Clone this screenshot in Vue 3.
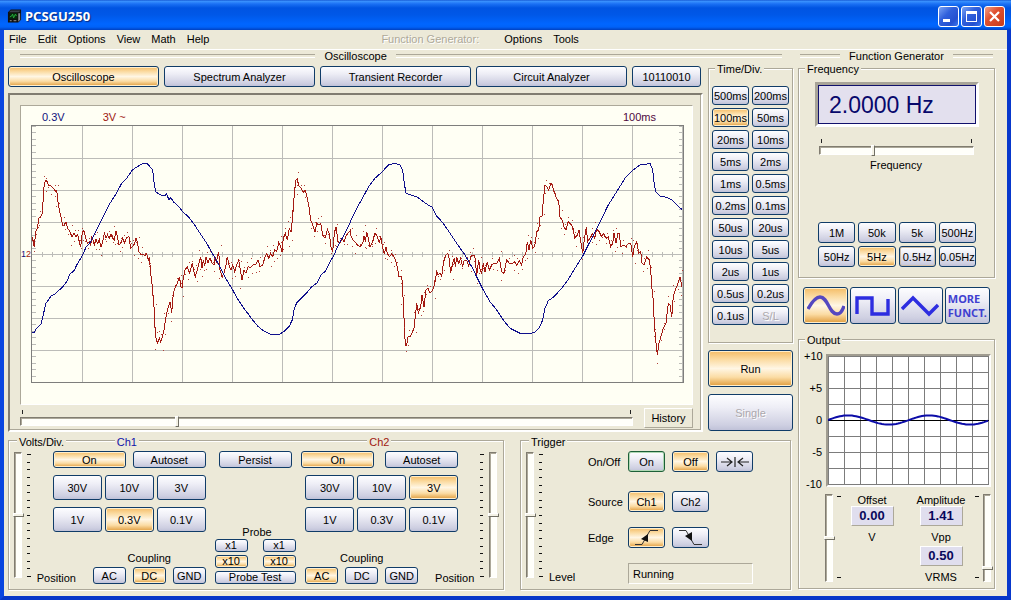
<script setup>
import { ref } from 'vue'

const menus = ['File', 'Edit', 'Options', 'View', 'Math', 'Help']
const tabs = ['Oscilloscope', 'Spectrum Analyzer', 'Transient Recorder', 'Circuit Analyzer', '10110010']
const activeTab = ref('Oscilloscope')

const timeDivs = [
  '500ms', '200ms', '100ms', '50ms', '20ms', '10ms', '5ms', '2ms', '1ms', '0.5ms', '0.2ms',
  '0.1ms', '50us', '20us', '10us', '5us', '2us', '1us', '0.5us', '0.2us', '0.1us', 'S/L'
]
const timeDiv = ref('100ms')

const volts = ['30V', '10V', '3V', '1V', '0.3V', '0.1V']
const couplings = ['AC', 'DC', 'GND']
const ch1 = ref({ volts: '0.3V', coupling: 'DC', probe: 'x10' })
const ch2 = ref({ volts: '3V', coupling: 'AC', probe: 'x10' })
const trigger = ref('Off')
const source = ref('Ch1')
const edge = ref('up')

const ranges = ['1M', '50k', '5k', '500Hz', '50Hz', '5Hz', '0.5Hz', '0.05Hz']
const range = ref('5Hz')
const wave = ref('sine')

const history = ref(155)
const position1 = ref(50)
const position2 = ref(50)
const level = ref(50)
const frequency = ref(34)
const offset = ref(50)
const amplitude = ref(86)

const ch2Samples = [
  '97,380 103,412 107,365 112,355 117,325 122,320 127,310 132,230 136,212 140,212 145,225 152,228 160,235 168,245 170,240 173,270 178,300 183,320 188,345 193,345 198,335 203,355 210,365 216,382 222,368 228,380 233,375 238,395 242,412 247,365 252,362 256,380 262,400 268,395 272,405 275,382 278,385 283,405 288,388 293,400 298,388 303,412 308,395 313,370 318,385 323,375 328,385 333,372 338,385 343,390 348,362 352,380 357,405 362,400 368,385 373,400 380,382 387,380 392,415 398,410 404,400 408,385 412,395 417,425 422,432 428,432 435,438 440,430 445,450 448,440 452,490 457,530 462,590 464,640 467,680 472,700 478,685 482,695 487,680 492,660 497,625 505,590 510,575 515,608 520,550 526,530 532,520 538,500 543,530 546,535 550,505 555,480 562,470 568,490 573,475 577,460 582,485 586,500 592,480 597,460 602,440 606,475 610,450 614,468 618,440 624,458 630,443 636,460 642,465 646,440 649,460 652,440 656,425 660,480 666,500 672,490 677,470 682,440 688,470 693,480 698,465 704,485 710,465 716,450 720,475 726,510 732,480 738,490 744,470 752,472 760,465 768,462 774,450 780,470 788,465 795,440 800,430 806,445 812,430 818,440 824,420 830,425 836,398 842,410 846,425 850,385 856,370 862,390 868,355 873,365 877,330 880,290 884,240 888,210 892,207 896,228 903,235 910,248 915,240 921,260 927,290 932,330 938,345 945,365 950,340 956,345 962,340 968,375 975,385 982,360 988,370 993,410 998,425 1003,370 1008,350 1014,395 1020,400 1026,385 1032,395 1038,378 1044,370 1050,362',
  '0,370 8,390 15,395 22,405 30,410 38,400 42,378 46,395 50,365 54,380 60,412 68,395 75,368 82,380 88,400 92,378 98,415 103,432 108,410 112,430 118,440 125,432 132,440 138,455 142,470 147,500 155,500 158,530 160,590 163,640 166,705 170,705 174,680 180,680 186,668 192,655 196,620 200,580 205,608 212,590 216,555 222,590 228,540 234,535 240,550 248,540 254,520 260,485 265,495 270,490 275,500 280,460 285,440 292,430 296,435 302,488 308,460 313,445 316,470 320,440 326,460 332,445 338,470 343,450 350,450 356,470 362,440 368,435 374,435 380,495 386,450 390,478 395,490 400,460 405,485 412,455 418,480 425,465 432,460 440,462 448,445 455,485 462,490 470,450 478,460 486,462 494,455 500,465 508,452 515,465 520,440 527,432 532,395 537,420 542,390 548,415 554,410 560,365 566,360 570,320 576,320 580,270 585,225 590,230 596,240 603,218 608,230 614,250 620,265 626,275 630,320 636,330 642,350 648,360 654,335 660,340 668,350 674,385 682,375 687,360 692,395 698,430 704,380 709,352 713,395 720,385 728,370 734,385 740,358 748,365 754,380 760,370 768,385 775,380 782,410 788,400 792,370 798,400 804,370 808,370 812,410 820,405 828,410 835,400 842,400 848,440 853,410 860,395 866,430 872,425 876,460 882,465 890,440 898,450 902,480 905,530 910,570 913,640 918,700 922,735 927,700 934,675 940,655 948,640 955,580 960,585 965,620 970,560 976,540 984,520 990,500 996,530'
]
const ch1Samples = [
  '97,668 102,668 107,658 115,650 123,643 130,615 137,580 147,568 153,557 165,552 178,540 190,528 200,515 210,492 222,482 232,462 245,440 258,412 272,395 290,360 310,320 330,280 350,248 365,220 380,205 397,180 412,170 425,162 440,160 450,170 458,180 463,225 467,245 480,254 494,258 500,252 507,270 512,262 520,275 535,288 548,305 565,320 582,342 600,370 620,400 640,435 660,470 677,505 695,535 715,570 735,600 742,608 758,630 775,650 790,662 805,670 820,675 840,672 855,662 867,650 877,630 882,600 890,578 905,563 920,548 935,530 950,520 965,492 975,485 990,455 1000,440 1015,405 1035,370 1050,340',
  '0,337 20,295 40,260 55,232 75,205 97,185 115,165 135,160 150,165 158,180 163,220 168,250 185,256 200,260 220,275 235,285 247,292 260,318 280,340 300,370 320,400 345,435 365,470 385,510 400,540 420,575 440,600 460,630 480,655 495,662 510,670 530,672 552,668 567,655 578,630 585,595 595,572 612,560 635,535 655,508 675,475 700,435 725,385 750,335 775,285 800,245 825,205 850,180 870,165 890,162 900,160 908,180 913,225 918,245 930,258 950,262 965,270 980,285 995,298'
]
const toPoints = (halves) =>
  halves.flatMap((half, i) =>
    half.split(' ').map((pair) => {
      const [x, y] = pair.split(',').map(Number)
      return [(x + i * 1050) / 3 - 31, y / 3 - 15]
    })
  )
const red = toPoints(ch2Samples)
const blue = toPoints(ch1Samples)
const path = (pts) => pts.map((p) => p.map((n) => n.toFixed(1)).join(',')).join(' ')
const redLine = path(red)
const blueLine = path(blue)
// Stray samples scattered round the noisy channel
const dots = red.map(([x, y], i) => [
  Math.round(x + ((i * 7) % 5) - 2),
  Math.round(y + (i % 2 ? 1 : -1) * (3 + ((i * 13) % 6)))
])

const gridX = Array.from({ length: 13 }, (_, i) => 51 + i * 50)
const gridY = Array.from({ length: 7 }, (_, i) => 33 + i * 32)
const sideTicks = Array.from({ length: 40 }, (_, i) => Math.round(1 + i * 6.4))
const midTicks = Array.from({ length: 64 }, (_, i) => 11 + i * 10)
const outputWave = Array.from({ length: 81 }, (_, i) => `${i * 2},${(64 - 4.6 * Math.sin((i * 2 * Math.PI * 2) / 81)).toFixed(1)}`).join(' ')
</script>

<template>
  <div class="window">
    <header class="titlebar">
      <svg class="appicon" viewBox="0 0 16 16" aria-hidden="true">
        <path d="M1 4 4 1h11v11l-3 3H1z" fill="#101010" />
        <path d="M2 4 4 2h10l-1 2z" fill="#39424a" />
        <path d="M12 5h2v7l-2 2z" fill="#8b8f93" />
        <rect x="3" y="5" width="8" height="6" fill="#06290d" />
        <path d="M3 9l2-1 1-2 1 4 1-2 1-2 1 2" stroke="#25b13c" fill="none" />
        <path d="M3 13h2M7 13h3" stroke="#999" />
      </svg>
      <h1>PCSGU250</h1>
      <div class="winbuttons">
        <button class="win" aria-label="Minimize"><svg viewBox="0 0 19 19"><path d="M4 12h7v3H4z" fill="#fff" /></svg></button>
        <button class="win" aria-label="Maximize"><svg viewBox="0 0 19 19"><path d="M4 4h11v11H4zM5 7v7h9V7z" fill="#fff" fill-rule="evenodd" /></svg></button>
        <button class="win close" aria-label="Close"><svg viewBox="0 0 19 19"><path d="M5 5l9 9M14 5l-9 9" stroke="#fff" stroke-width="2.2" /></svg></button>
      </div>
    </header>

    <nav class="menubar">
      <button v-for="m in menus" :key="m">{{ m }}</button>
      <span class="menutitle">Function Generator:</span>
      <button>Options</button>
      <button>Tools</button>
    </nav>

    <main class="main">
      <section class="scope">
        <h2 class="ruled">Oscilloscope</h2>
        <div class="upper">
          <div class="display">
            <div class="tabs">
              <button v-for="t in tabs" :key="t" class="btn" :class="{ on: t === activeTab }" @click="activeTab = t">{{ t }}</button>
            </div>
            <div class="bezel">
              <div class="screen">
                <div class="readouts">
                  <span class="navy">0.3V</span><span class="red">3V ~</span><span class="plum">100ms</span>
                </div>
                <div class="plotrow">
                  <span class="zero"><span class="navy">1</span><span class="red">2</span></span>
                  <svg class="plot" viewBox="0 0 653 258" preserveAspectRatio="none" shape-rendering="crispEdges">
                    <g fill="#bcbcb8">
                      <rect v-for="x in gridX" :key="'x' + x" :x="x" y="0" width="1" height="258" />
                      <rect v-for="y in gridY" :key="'y' + y" x="0" :y="y" width="653" height="1" />
                      <rect v-for="y in sideTicks" :key="'l' + y" x="1" :y="y" width="4" height="1" />
                      <rect v-for="y in sideTicks" :key="'r' + y" x="648" :y="y" width="4" height="1" />
                      <rect v-for="x in midTicks" :key="'m' + x" :x="x" y="127" width="1" height="5" />
                    </g>
                    <rect x="0.5" y="0.5" width="652" height="257" fill="none" stroke="#7e7e7c" />
                    <polyline :points="redLine" fill="none" stroke="#a41a12" />
                    <g fill="#b04038">
                      <rect v-for="(d, i) in dots" :key="i" :x="d[0]" :y="d[1]" width="1" height="1" />
                    </g>
                    <polyline :points="blueLine" fill="none" stroke="#10108c" />
                  </svg>
                </div>
              </div>
              <div class="historyrow">
                <div class="hslider">
                  <div class="hticks"><i></i><i></i></div>
                  <input v-model="history" type="range" min="0" max="610" aria-label="History position" />
                </div>
                <button class="flat">History</button>
              </div>
            </div>
          </div>
          <div class="timecol">
            <section class="group timediv">
              <h3>Time/Div.</h3>
              <div class="timegrid">
                <button v-for="t in timeDivs" :key="t" class="btn" :class="{ on: t === timeDiv }" :disabled="t === 'S/L'" @click="timeDiv = t">{{ t }}</button>
              </div>
            </section>
            <button class="btn big on">Run</button>
            <button class="btn big" disabled>Single</button>
          </div>
        </div>

        <div class="lower">
          <section class="group volts">
            <h3>Volts/Div.</h3>
            <div class="vslider">
              <input v-model="position1" type="range" aria-label="Ch1 position" />
              <div class="vticks"><i v-for="n in 17" :key="n"></i></div>
            </div>
            <div class="channel first">
              <h4 class="ch blue">Ch1</h4>
              <div class="pair"><button class="btn on">On</button><button class="btn">Autoset</button></div>
              <div class="voltgrid">
                <button v-for="v in volts" :key="v" class="btn" :class="{ on: v === ch1.volts }" @click="ch1.volts = v">{{ v }}</button>
              </div>
              <div class="couplabel">Coupling</div>
              <div class="coupling">
                <span>Position</span>
                <button v-for="c in couplings" :key="c" class="btn" :class="{ on: c === ch1.coupling }" @click="ch1.coupling = c">{{ c }}</button>
              </div>
            </div>
            <div class="probe">
              <button class="btn persist">Persist</button>
              <div class="probelabel">Probe</div>
              <div class="probegrid">
                <template v-for="p in ['x1', 'x10']" :key="p">
                  <button class="btn" :class="{ on: p === ch1.probe }" @click="ch1.probe = p">{{ p }}</button>
                  <button class="btn" :class="{ on: p === ch2.probe }" @click="ch2.probe = p">{{ p }}</button>
                </template>
                <button class="btn test">Probe Test</button>
              </div>
            </div>
            <div class="channel second">
              <h4 class="ch red">Ch2</h4>
              <div class="pair"><button class="btn on">On</button><button class="btn">Autoset</button></div>
              <div class="voltgrid">
                <button v-for="v in volts" :key="v" class="btn" :class="{ on: v === ch2.volts }" @click="ch2.volts = v">{{ v }}</button>
              </div>
              <div class="couplabel">Coupling</div>
              <div class="coupling">
                <button v-for="c in couplings" :key="c" class="btn" :class="{ on: c === ch2.coupling }" @click="ch2.coupling = c">{{ c }}</button>
                <span>Position</span>
              </div>
            </div>
            <div class="vslider">
              <div class="vticks"><i v-for="n in 17" :key="n"></i></div>
              <input v-model="position2" type="range" aria-label="Ch2 position" />
            </div>
          </section>

          <section class="group trigger">
            <h3>Trigger</h3>
            <div class="vslider">
              <input v-model="level" type="range" aria-label="Trigger level" />
              <div class="vticks"><i v-for="n in 17" :key="n"></i></div>
            </div>
            <span class="level">Level</span>
            <div class="trigrid">
              <span>On/Off</span>
              <div class="trow">
                <button class="btn green" :class="{ on: trigger === 'On' }" @click="trigger = 'On'">On</button>
                <button class="btn" :class="{ on: trigger === 'Off' }" @click="trigger = 'Off'">Off</button>
                <button class="btn" aria-label="Center trigger level">
                  <svg viewBox="0 0 28 12" class="ico28"><path d="M0 6h11M6 2l5 4-5 4M14 1v10M28 6H17M22 2l-5 4 5 4" fill="none" stroke="#222" stroke-width="1.2" /></svg>
                </button>
              </div>
              <span>Source</span>
              <div class="trow source">
                <button class="btn" :class="{ on: source === 'Ch1' }" @click="source = 'Ch1'">Ch1</button>
                <button class="btn" :class="{ on: source === 'Ch2' }" @click="source = 'Ch2'">Ch2</button>
              </div>
              <span>Edge</span>
              <div class="trow">
                <button class="btn" aria-label="Rising edge" :class="{ on: edge === 'up' }" @click="edge = 'up'">
                  <svg viewBox="0 0 24 17" class="ico24"><path d="M0 15.5h7L15 1.5h8" fill="none" stroke="#333" /><path d="M13 5v8L6 10z" fill="#111" /></svg>
                </button>
                <button class="btn" aria-label="Falling edge" :class="{ on: edge === 'down' }" @click="edge = 'down'">
                  <svg viewBox="0 0 24 17" class="ico24"><path d="M0 1.5h7l8 14h8" fill="none" stroke="#333" /><path d="M13 3v9L6 7z" fill="#111" /></svg>
                </button>
              </div>
              <output class="status">Running</output>
            </div>
          </section>
        </div>
      </section>

      <section class="generator">
        <h2 class="ruled">Function Generator</h2>
        <section class="group freq">
          <h3>Frequency</h3>
          <output class="lcd"><span>2.0000 Hz</span></output>
          <div class="hslider fslider">
            <div class="hticks"><i></i><i></i></div>
            <input id="freq" v-model="frequency" type="range" />
          </div>
          <label for="freq" class="freqlabel">Frequency</label>
          <div class="ranges">
            <button v-for="r in ranges" :key="r" class="btn" :class="{ on: r === range, warm: r === '0.5Hz' }" @click="range = r">{{ r }}</button>
          </div>
        </section>

        <div class="waves">
          <button class="btn" aria-label="Sine" :class="{ on: wave === 'sine' }" @click="wave = 'sine'">
            <svg viewBox="0 0 38 24"><path d="M1 15C6 6 10 3 13 3c8 0 9 17 17 17 3 0 5-2 7-8" fill="none" stroke="#5548c0" stroke-width="3.4" /></svg>
          </button>
          <button class="btn" aria-label="Square" :class="{ on: wave === 'square' }" @click="wave = 'square'">
            <svg viewBox="0 0 38 24"><path d="M3 20V4h15v16h16V5" fill="none" stroke="#2d2de0" stroke-width="3.4" /></svg>
          </button>
          <button class="btn" aria-label="Triangle" :class="{ on: wave === 'triangle' }" @click="wave = 'triangle'">
            <svg viewBox="0 0 38 24"><path d="M1 15 12 4l16 16 9-9" fill="none" stroke="#2d2de0" stroke-width="3.4" /></svg>
          </button>
          <button class="btn more">MORE<br />FUNCT.</button>
        </div>

        <section class="group output">
          <h3>Output</h3>
          <div class="graph">
            <div class="axis"><span>+10</span><span>+5</span><span>0</span><span>-5</span><span>-10</span></div>
            <div class="well">
              <svg viewBox="0 0 161 129" preserveAspectRatio="none">
                <g fill="#7c7c7c" shape-rendering="crispEdges">
                  <rect v-for="n in 11" :key="'x' + n" :x="(n - 1) * 16" y="0" width="1" height="129" />
                  <rect v-for="n in 9" :key="'y' + n" x="0" :y="(n - 1) * 16" width="161" height="1" />
                </g>
                <rect x="0" y="64" width="161" height="1" fill="#000" shape-rendering="crispEdges" />
                <polyline :points="outputWave" fill="none" stroke="#0c0ca8" stroke-width="2" />
              </svg>
            </div>
          </div>
          <div class="levels">
            <div class="vslider short">
              <input v-model="offset" type="range" aria-label="Offset" />
              <div class="vticks"><i></i><i></i></div>
            </div>
            <div class="value">
              <span>Offset</span><output>0.00</output><span class="unit">V</span>
            </div>
            <div class="value amp">
              <span>Amplitude</span><output>1.41</output><span class="unit">Vpp</span>
              <output>0.50</output><span class="unit">VRMS</span>
            </div>
            <div class="vslider short">
              <div class="vticks"><i></i><i></i></div>
              <input v-model="amplitude" type="range" aria-label="Amplitude" />
            </div>
          </div>
        </section>
      </section>
    </main>
  </div>
</template>

<style>
body { margin: 0; background: #ece9d8; }
</style>

<style scoped>
* { box-sizing: border-box; }
.window {
  min-height: 100vh;
  display: flex;
  flex-direction: column;
  background: #ece9d8;
  border: solid;
  border-width: 0 4px 4px;
  border-color: #0a46e0 #0838cc #0636c8 #0a46e0;
  font: 11px/12px "Liberation Sans", Arial, sans-serif;
  color: #000;
}
button { font: inherit; color: inherit; margin: 0; padding: 0; white-space: nowrap; }
h1, h2, h3, h4 { margin: 0; font: inherit; }
.navy { color: #10107c; }
.blue { color: #1010a8; }
.red { color: #a01810; }
.plum { color: #500840; }

.titlebar {
  height: 30px;
  margin: 0 -4px;
  padding: 2px 6px 0 7px;
  display: flex;
  align-items: center;
  gap: 3px;
  background: linear-gradient(#0a48c8, #3d95ff 1px, #1a70f4 4px, #0054e2 8px, #0058e8 15px, #0066ff 24px, #0062f8 27px, #0040c0 30px);
  color: #fff;
}
.appicon { width: 15px; height: 16px; }
.titlebar h1 { flex: 1; font: bold 13px/18px "Noto Sans", sans-serif; text-shadow: 1px 1px 1px #0a2a80; }
.winbuttons { display: flex; gap: 2px; }
.win {
  width: 21px;
  height: 21px;
  border: 1px solid #fff;
  border-radius: 3px;
  background: linear-gradient(135deg, #7ba4f4, #3060dc 40%, #2450d0 75%, #3a78f0);
}
.win svg { display: block; width: 19px; height: 19px; }
.close { background: linear-gradient(135deg, #f0a088, #e05030 40%, #c83c18); }

.menubar {
  height: 20px;
  padding: 0 5px 2px;
  display: flex;
  align-items: center;
  gap: 11px;
  border-bottom: 1px solid #fff;
}
.menubar button { border: 0; background: none; }
.menutitle { margin: 0 14px 0 161px; color: #aca899; text-shadow: 1px 1px 0 #fff; }

.main { flex: 1; display: flex; gap: 5px; padding: 0 12px 6px 4px; }
.scope { flex: 1; min-width: 0; display: flex; flex-direction: column; }
.ruled { display: flex; align-items: center; gap: 9px; height: 12px; margin: 0 11px 4px 12px; }
.ruled::before, .ruled::after {
  content: "";
  flex: 296 1 0;
  height: 2px;
  border-top: 1px solid #aca899;
  border-bottom: 1px solid #fff;
}
.scope .ruled::after { flex-grow: 387; }
.generator .ruled { margin: 0 2px 4px; }

.upper { display: flex; gap: 5px; }
.display { flex: 1; min-width: 0; display: flex; flex-direction: column; gap: 6px; }
.tabs { display: grid; grid-template-columns: 151fr 151fr 151fr 151fr 69fr; gap: 5px; margin-right: 2px; }
.tabs .btn { height: 21px; }

.btn {
  border: 1px solid #103c68;
  border-radius: 3px;
  background: linear-gradient(#fdfdff, #eeeef6 35%, #cfd0e2 85%, #c0c2d8);
  line-height: 12px;
  display: flex;
  align-items: center;
  justify-content: center;
}
.btn.on {
  background: linear-gradient(#f4bc66, #fbdca4 25%, #fff6e4 50%, #fbdca4 75%, #e09c3c);
  box-shadow: inset 0 0 0 1px #ffeecb;
}
.btn:disabled { color: #aca8ac; text-shadow: 1px 1px 0 #fff; }
.btn.green { border-color: #1c6038; box-shadow: inset 0 0 0 1px #b0d8b4; }
.btn.warm { box-shadow: inset 0 0 0 1px #d0c0ac; }
.btn.big { height: 37px; }

.bezel {
  padding: 10px 8px 2px 10px;
  border: 2px solid;
  border-color: #807c70 #fff #fff #807c70;
  box-shadow: inset -1px -1px 0 #aca899;
}
.screen {
  height: 300px;
  padding: 5px 8px 0 0;
  background: #fffff4;
  border: 1px solid;
  border-color: #aca899 #fff #fff #aca899;
}
.readouts { display: flex; padding: 0 28px 2px 21px; height: 14px; }
.readouts .red { margin-left: 38px; }
.readouts .plum { margin-left: auto; }
.plotrow { display: flex; align-items: center; }
.zero { width: 10px; font-size: 9px; text-align: center; }
.plot { flex: 1; min-width: 0; width: 100%; height: 258px; }
.historyrow { display: flex; gap: 11px; align-items: flex-start; padding-top: 3px; }
.flat {
  width: 49px;
  height: 20px;
  border: 1px solid;
  border-color: #fff #aca899 #aca899 #fff;
  background: #ece9d8;
}
.hslider { flex: 1; display: flex; flex-direction: column; padding-top: 2px; }
.hticks { display: flex; justify-content: space-between; padding: 0 2px; margin-bottom: 3px; }
.hticks i { width: 1px; height: 4px; background: #222; }

input[type="range"] {
  appearance: none;
  -webkit-appearance: none;
  margin: 0;
  background: #fffffa;
  border: 1px solid;
  border-color: #807c70 #fff #fff #807c70;
  box-shadow: inset 1px 1px 0 #aca899;
}
.hslider input { width: 100%; height: 9px; }
.hslider input::-webkit-slider-thumb {
  -webkit-appearance: none;
  width: 4px;
  height: 11px;
  background: #f4f2e6;
  border: 1px solid;
  border-color: #fff #716f64 #716f64 #fff;
}
.vslider { display: flex; gap: 5px; height: 126px; margin-top: 5px; }
.vslider input { writing-mode: vertical-lr; width: 8px; height: 100%; }
.vslider input::-webkit-slider-thumb {
  -webkit-appearance: none;
  width: 11px;
  height: 4px;
  background: #f4f2e6;
  border: 1px solid;
  border-color: #fff #716f64 #716f64 #fff;
}
.vticks { display: flex; flex-direction: column; justify-content: space-between; padding: 2px 0 1px; }
.vticks i { width: 3px; height: 1px; background: #111; }
.vticks i:first-child, .vticks i:last-child { width: 4px; }

.timecol { width: 85px; display: flex; flex-direction: column; gap: 7px; padding-top: 2px; }
.group {
  position: relative;
  border: 1px solid #aca899;
  box-shadow: inset 1px 1px 0 #fff, 1px 1px 0 #fff;
}
.group h3, .ch { background: #ece9d8; width: fit-content; padding: 0 2px; height: 12px; }
.group h3 { position: absolute; top: -6px; left: 6px; }
.timediv { height: 275px; padding: 17px 3px 0; }
.timegrid { display: grid; grid-template-columns: 1fr 1fr; gap: 3px; }
.timegrid .btn { height: 19px; }

.lower { display: flex; gap: 16px; margin-top: 8px; padding-right: 2px; }
.volts { flex: 483 1 0; display: flex; justify-content: space-between; height: 150px; padding: 6px 6px 0 5px; }
.volts h3, .trigger h3 { top: -5px; left: 8px; }
.channel { width: 170px; display: flex; flex-direction: column; align-items: flex-end; margin-top: -11px; }
.channel.first { width: 169px; margin-right: 3px; }
.channel .ch { align-self: flex-start; margin: 0 0 3px 78px; }
.pair { display: flex; gap: 7px; }
.pair .btn { width: 73px; height: 17px; }
.voltgrid { display: grid; grid-template-columns: repeat(3, 49px); gap: 7px 3px; margin-top: 7px; }
.voltgrid .btn { height: 25px; }
.couplabel { width: 113px; text-align: center; margin-top: 20px; height: 12px; }
.coupling { display: flex; gap: 7px; margin-top: 3px; height: 17px; width: 100%; }
.coupling .btn { width: 33px; }
.coupling span { padding-top: 5px; margin-right: auto; }
.channel.second { width: 173px; align-items: flex-start; }
.second .ch { margin-left: 66px; }
.second .pair { gap: 11px; }
.second .voltgrid, .second .couplabel, .second .coupling { margin-left: 4px; }
.second .coupling { width: 169px; }
.second .coupling span { margin: 0 0 0 10px; }
.probe { width: 81px; display: flex; flex-direction: column; align-items: center; margin-top: 4px; }
.persist { width: 73px; height: 17px; }
.probelabel { margin-top: 58px; padding-left: 4px; height: 13px; }
.probegrid { display: grid; grid-template-columns: 33px 33px; gap: 3px 15px; width: 100%; }
.probegrid .btn { height: 13px; line-height: 11px; }
.test { grid-column: 1 / -1; }

.trigger { flex: 259 1 0; display: flex; align-items: flex-start; padding: 6px 5px 0; }
.level { align-self: flex-end; width: 45px; padding: 0 0 6px 6px; }
.trigrid { display: grid; grid-template-columns: 40px 125px; align-items: center; margin-top: 4px; }
.trow { display: flex; gap: 7px; }
.trow .btn { width: 37px; height: 21px; }
.trow.source { margin: 19px 0 15px; }
.trigrid span:nth-of-type(2) { padding-top: 4px; }
.ico28 { width: 28px; height: 12px; }
.ico24 { width: 24px; height: 17px; }
.status {
  grid-column: 2;
  height: 21px;
  margin-top: 15px;
  padding: 4px;
  border: 1px solid;
  border-color: #aca899 #fff #fff #aca899;
}

.generator { width: 197px; display: flex; flex-direction: column; }
.freq { margin-top: 2px; height: 210px; padding: 13px 15px 0 16px; display: flex; flex-direction: column; }
.lcd {
  padding: 0;
  border: 3px solid;
  border-color: #a8a498 #fff #fff #a8a498;
}
.lcd span {
  display: block;
  height: 39px;
  padding-left: 10px;
  background: #e3e0ee;
  border: 1px solid #10106c;
  color: #08086c;
  font-size: 23px;
  line-height: 39px;
}
.fslider { flex: none; margin: 10px 5px 0 4px; }
.freqlabel { text-align: center; margin: 4px 2px 0 0; }
.ranges { display: grid; grid-template-columns: repeat(4, 1fr); gap: 3px; margin: 51px 3px 0; }
.ranges .btn { height: 21px; }
.waves { display: grid; grid-template-columns: repeat(4, 1fr); gap: 2px; margin: 9px 5px 0; }
.waves .btn { height: 37px; }
.waves svg { width: 38px; height: 24px; }
.more { font: bold 11px/14px "Noto Sans", sans-serif; color: #4040d0; text-align: left; }

.output { margin-top: 15px; height: 250px; padding: 14px 3px 0 5px; }
.graph { display: flex; gap: 4px; }
.axis { width: 18px; display: flex; flex-direction: column; justify-content: space-between; text-align: right; height: 140px; margin: -4px 0 -9px; }
.well { flex: 1; border: 2px solid; border-color: #a09c90 #fff #fff #a09c90; background: #fff; height: 133px; }
.well svg { display: block; width: 100%; height: 129px; }
.levels { display: flex; justify-content: space-between; padding: 0 0 0 21px; margin-top: 7px; }
.vslider.short { height: 88px; margin-top: 0; gap: 4px; }
.short .vticks { padding-bottom: 4px; }
.value { display: flex; flex-direction: column; align-items: center; text-align: center; width: 42px; }
.value.amp { width: 48px; margin-left: 14px; }
.value output {
  width: 43px;
  height: 20px;
  background: #e0deee;
  border: 1px solid;
  border-color: #fff #aca899 #aca899 #fff;
  color: #08085c;
  font: bold 13px/18px "Liberation Sans", Arial, sans-serif;
}
.unit { height: 20px; padding-top: 5px; }
</style>
